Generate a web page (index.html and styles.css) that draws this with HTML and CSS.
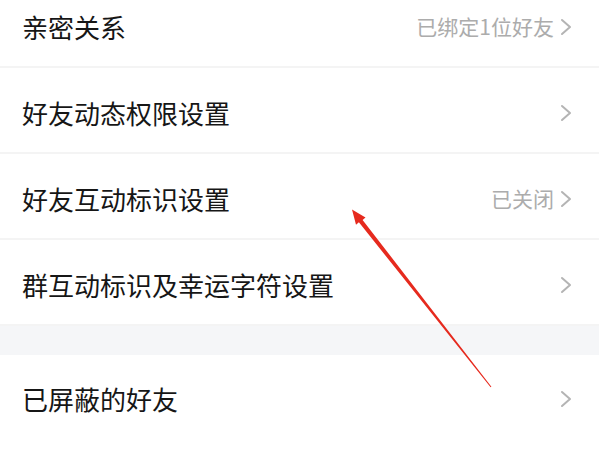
FILE: index.html
```html
<!DOCTYPE html>
<html lang="zh-CN">
<head>
<meta charset="utf-8">
<link rel="stylesheet" href="styles.css">
</head>
<body>
<div class="page">
  <div class="group">
    <div class="row">
      <span class="label">亲密关系</span>
      <span class="meta"><span class="value">已绑定1位好友</span><svg class="chev" viewBox="0 0 12 18"><polyline points="2,2 10,9 2,16"/></svg></span>
    </div>
    <div class="row">
      <span class="label">好友动态权限设置</span>
      <span class="meta"><svg class="chev" viewBox="0 0 12 18"><polyline points="2,2 10,9 2,16"/></svg></span>
    </div>
    <div class="row">
      <span class="label">好友互动标识设置</span>
      <span class="meta"><span class="value">已关闭</span><svg class="chev" viewBox="0 0 12 18"><polyline points="2,2 10,9 2,16"/></svg></span>
    </div>
    <div class="row">
      <span class="label">群互动标识及幸运字符设置</span>
      <span class="meta"><svg class="chev" viewBox="0 0 12 18"><polyline points="2,2 10,9 2,16"/></svg></span>
    </div>
  </div>
  <div class="gap"></div>
  <div class="group">
    <div class="row tall">
      <span class="label">已屏蔽的好友</span>
      <span class="meta"><svg class="chev" viewBox="0 0 12 18"><polyline points="2,2 10,9 2,16"/></svg></span>
    </div>
  </div>
  <svg class="arrow" width="599" height="450" viewBox="0 0 599 450">
    <polygon points="352,209.5 365.5,217.6 362.6,219.9 491.4,386.7 490.6,387.3 358.9,222.3 356,224.8"/>
  </svg>
</div>
</body>
</html>
```

FILE: styles.css
```css
html, body {
  margin: 0;
  padding: 0;
  background: #ffffff;
}
body {
  width: 599px;
  height: 450px;
  overflow: hidden;
  font-family: "Noto Sans CJK SC", "Noto Sans", sans-serif;
}
.page {
  position: relative;
  width: 599px;
  height: 450px;
  overflow: hidden;
}
.group {
  display: flex;
  flex-direction: column;
}
.group:first-child {
  margin-top: -18px;
}
.row {
  box-sizing: border-box;
  height: 86px;
  display: flex;
  align-items: center;
  justify-content: space-between;
  padding: 5px 27px 0 22px;
  border-bottom: 2px solid #f4f4f4;
}
.row.tall {
  height: 88px;
  padding-top: 0;
  border-bottom: none;
}
.label {
  font-size: 26px;
  color: #161616;
  line-height: 1;
}
.meta {
  display: flex;
  align-items: center;
  gap: 6px;
}
.value {
  font-size: 21px;
  color: #acacac;
  line-height: 1;
}
.chev {
  width: 12px;
  height: 18px;
}
.chev polyline {
  fill: none;
  stroke: #b4b4b4;
  stroke-width: 2;
  stroke-linecap: round;
  stroke-linejoin: round;
}
.gap {
  height: 28.5px;
  background: #f5f6f8;
}
.arrow {
  position: absolute;
  left: 0;
  top: 0;
  pointer-events: none;
}
.arrow polygon {
  fill: #e62a1e;
}
```
